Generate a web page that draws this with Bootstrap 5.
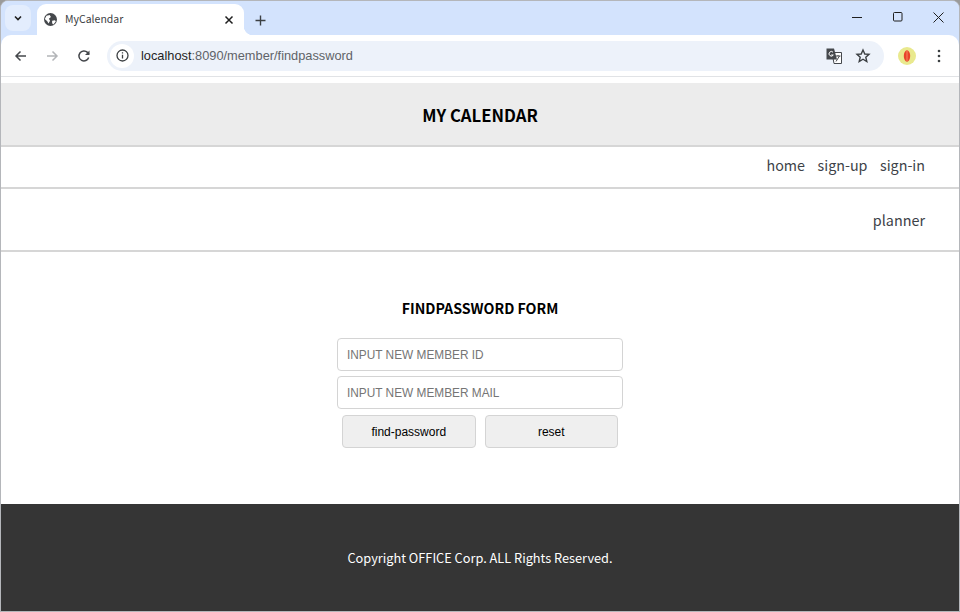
<!DOCTYPE html>
<html lang="en"><head><meta charset="utf-8"><title>MyCalendar</title>
<link href="https://cdn.jsdelivr.net/npm/bootstrap@5.3.0/dist/css/bootstrap.min.css" rel="stylesheet">
<style>
html,body{height:100%;margin:0;overflow:hidden;background:#9a9a9a}
body{font-family:"Noto Sans CJK KR","Noto Sans",sans-serif}
.win{width:960px;height:612px;background:#d3e3fd;border:1px solid #b4b6ba;border-radius:8px 8px 0 0;overflow:hidden;display:flex;flex-direction:column}
.tabstrip{height:34px;background:#d3e3fd;flex:none;padding:3px 0 0 4px}
.tabmenu{width:26px;height:26px;border-radius:8px;background:#e3edfd;margin-top:1px}
.tabbox{position:relative;width:207px;height:31px;background:#fff;border-radius:9px 9px 0 0;margin-left:6px;padding:0 10px 0 7px;font:10.500px/1 "Noto Sans CJK KR",sans-serif;color:#3c4043}
.tabbox::after{content:"";position:absolute;right:-9px;bottom:0;width:9px;height:9px;background:radial-gradient(circle at 100% 0,transparent 9px,#fff 9.500px)}
.tabtitle{margin-left:8px;margin-top:-1px}
.plusico{margin:11px 0 0 11px}
.winbtns{margin-left:auto}
.winbtn{width:41px;height:30px;margin-top:-2px}
.toolbar{height:42px;flex:none;background:#fff;border-bottom:1px solid #e1e3e6;border-radius:10px 10px 0 0;padding-left:3px}
.navico{width:32px;height:32px}
.navico.firstico{margin-left:1px;margin-right:-1px}
.omni{height:30px;width:777px;background:#edf2fa;border-radius:15px;margin-left:7px;padding:0 8px 0 3px;font:12.800px/1 "Liberation Sans",Arial,sans-serif;color:#5f6368}
.omni b{font-weight:400;color:#1f1f1f}
.urltext{margin-top:2px}
.infobtn{width:24px;height:24px;border-radius:50%;background:#fff;margin-right:7px}
.omniend{margin-left:auto;gap:13px;padding-right:5px}
.profile{width:18px;height:18px;border-radius:50%;background:#e9e98e;margin-left:14px}
.dotsbtn{margin-left:21px}
.gapband{height:6px;flex:none;background:#fff}
.pagehead{height:64px;flex:none;background:#ececec;border-bottom:2px solid #d6d6d6;padding-top:4px;font-size:16.700px;font-weight:700;color:#000}
.toplinks{height:42px;flex:none;background:#fff;border-bottom:2px solid #d6d6d6;padding-right:34px;padding-bottom:4px;gap:12.500px;font-size:14.300px;color:#3d4248}
.subnav{height:63px;flex:none;background:#fff;border-bottom:2px solid #d6d6d6;padding-right:34px;font-size:14.400px;color:#3d4248}
.toplinks a,.subnav a{color:inherit;text-decoration:none}
.mainarea{flex:1 1 auto;background:#fff;padding-top:45px}
.formtitle{font-size:14.200px;font-weight:700;color:#000;text-align:center;line-height:22px;margin:0 0 19px}
.formbox{width:286px;margin:0 auto}
.fieldinput{display:block;width:286px;height:33px;border:1px solid #d4d4d4;border-radius:4px;padding:0 9px;font:11.850px "Liberation Sans",Arial,sans-serif;margin-bottom:5px;outline:none}
.fieldinput::placeholder{color:#757575;opacity:1}
.btnrow{gap:9px;padding:1px 5px 0}
.actbtn{width:134px;height:33px;padding:0;background:#efefef;border:1px solid #d4d4d4;border-radius:4px;font:12px "Liberation Sans",Arial,sans-serif;color:#000}
.pagefoot{height:107px;flex:none;background:#353535;color:#fff;font-size:12.750px}
</style></head><body>
<div class="win">
 <div class="tabstrip d-flex">
  <div class="tabmenu d-flex align-items-center justify-content-center"><svg width="10" height="10" viewBox="0 0 10 10"><path d="M2 3.500 5 6.500 8 3.500" fill="none" stroke="#1f1f1f" stroke-width="1.600"/></svg></div>
  <div class="tabbox d-flex align-items-center">
   <svg width="13" height="13" viewBox="0 0 16 16"><circle cx="8" cy="8" r="8" fill="#45484c"/><path d="M3 3.500 7 2.500 8.500 5 6 7 7.500 9.500 5.500 13 4 10 1 7.500zM10 9.500l3.500-.5 1 1.500-3 3.500-1.500-1.500z" fill="#fff"/></svg>
   <span class="tabtitle">MyCalendar</span>
   <svg class="ms-auto" width="10" height="10" viewBox="0 0 10 10"><path d="M1.500 1.500 8.500 8.500M8.500 1.500 1.500 8.500" stroke="#1f1f1f" stroke-width="1.500"/></svg>
  </div>
  <svg class="plusico" width="11" height="11" viewBox="0 0 11 11"><path d="M5.500.5v10M.5 5.500h10" stroke="#3c4043" stroke-width="1.400"/></svg>
  <div class="winbtns d-flex">
   <div class="winbtn d-flex align-items-center justify-content-center"><svg width="10" height="10" viewBox="0 0 10 10"><path d="M0 5.500h10" stroke="#1f1f1f"/></svg></div>
   <div class="winbtn d-flex align-items-center justify-content-center"><svg width="10" height="10" viewBox="0 0 10 10"><rect x=".5" y=".5" width="8.500" height="8.500" rx="1" fill="none" stroke="#1f1f1f"/></svg></div>
   <div class="winbtn d-flex align-items-center justify-content-center"><svg width="11" height="11" viewBox="0 0 11 11"><path d="M.5.5l10 10M10.500.5l-10 10" stroke="#1f1f1f"/></svg></div>
  </div>
 </div>
 <div class="toolbar d-flex align-items-center">
  <div class="navico firstico d-flex align-items-center justify-content-center"><svg width="14" height="14" viewBox="0 0 14 14"><path d="M12 7H2M6.500 2.500 2 7l4.500 4.500" fill="none" stroke="#45484c" stroke-width="1.500"/></svg></div>
  <div class="navico d-flex align-items-center justify-content-center"><svg width="14" height="14" viewBox="0 0 14 14"><path d="M2 7h10M7.500 2.500 12 7l-4.500 4.500" fill="none" stroke="#b3b5b8" stroke-width="1.500"/></svg></div>
  <div class="navico d-flex align-items-center justify-content-center"><svg width="14" height="14" viewBox="0 0 14 14"><path d="M11.700 8.500A5 5 0 1 1 10.500 3.400L12 5" fill="none" stroke="#45484c" stroke-width="1.500"/><path d="M12.500 1.500v4.500H8z" fill="#45484c"/></svg></div>
  <div class="omni d-flex align-items-center">
   <div class="infobtn d-flex align-items-center justify-content-center"><svg width="13" height="13" viewBox="0 0 13 13"><circle cx="6.500" cy="6.500" r="5.500" fill="none" stroke="#3c4043" stroke-width="1.300"/><path d="M6.500 5.800v3.700M6.500 3.200v1.400" stroke="#3c4043" stroke-width="1.300"/></svg></div>
   <span class="urltext"><b>localhost</b>:8090/member/findpassword</span>
   <div class="omniend d-flex align-items-center">
    <svg width="16" height="16" viewBox="0 0 16 16"><path d="M6 4.500h9.500v11H8z" fill="#fff" stroke="#45484c"/><path d="M.5.500h7.500l3 11H.5z" fill="#45484c"/><path d="M7 4.200A2.300 2.300 0 1 0 7.300 7H5.200" fill="none" stroke="#fff"/><path d="M9.500 8h5M12 7v1M10 13.500l3.500-5.500" stroke="#45484c" fill="none"/></svg>
    <svg width="16" height="16" viewBox="0 0 16 16"><path d="M8 2l1.800 4 4.200.4-3.200 2.800 1 4.300L8 11.200 4.200 13.500l1-4.300L2 6.400 6.200 6z" fill="none" stroke="#3c4043" stroke-width="1.400"/></svg>
   </div>
  </div>
  <div class="profile d-flex align-items-center justify-content-center"><svg width="8" height="12" viewBox="0 0 8 12"><ellipse cx="4" cy="6" rx="3.200" ry="5.800" fill="#e8432b"/><path d="M4 1v10" stroke="#f58a5e"/></svg></div>
  <div class="dotsbtn d-flex"><svg width="4" height="14" viewBox="0 0 4 14"><circle cx="2" cy="2" r="1.300" fill="#3c4043"/><circle cx="2" cy="7" r="1.300" fill="#3c4043"/><circle cx="2" cy="12" r="1.300" fill="#3c4043"/></svg></div>
 </div>
 <div class="gapband"></div>
 <header class="pagehead d-flex align-items-center justify-content-center">MY CALENDAR</header>
 <nav class="toplinks d-flex align-items-center justify-content-end"><a href="#">home</a><a href="#">sign-up</a><a href="#">sign-in</a></nav>
 <nav class="subnav d-flex align-items-center justify-content-end"><a href="#">planner</a></nav>
 <main class="mainarea">
  <h1 class="formtitle">FINDPASSWORD FORM</h1>
  <form class="formbox">
   <input class="fieldinput" placeholder="INPUT NEW MEMBER ID">
   <input class="fieldinput" placeholder="INPUT NEW MEMBER MAIL">
   <div class="btnrow d-flex"><button type="button" class="actbtn">find-password</button><button type="reset" class="actbtn">reset</button></div>
  </form>
 </main>
 <footer class="pagefoot d-flex align-items-center justify-content-center">Copyright OFFICE Corp. ALL Rights Reserved.</footer>
</div>
<script src="https://cdn.jsdelivr.net/npm/bootstrap@5.3.0/dist/js/bootstrap.bundle.min.js"></script>
</body></html>
